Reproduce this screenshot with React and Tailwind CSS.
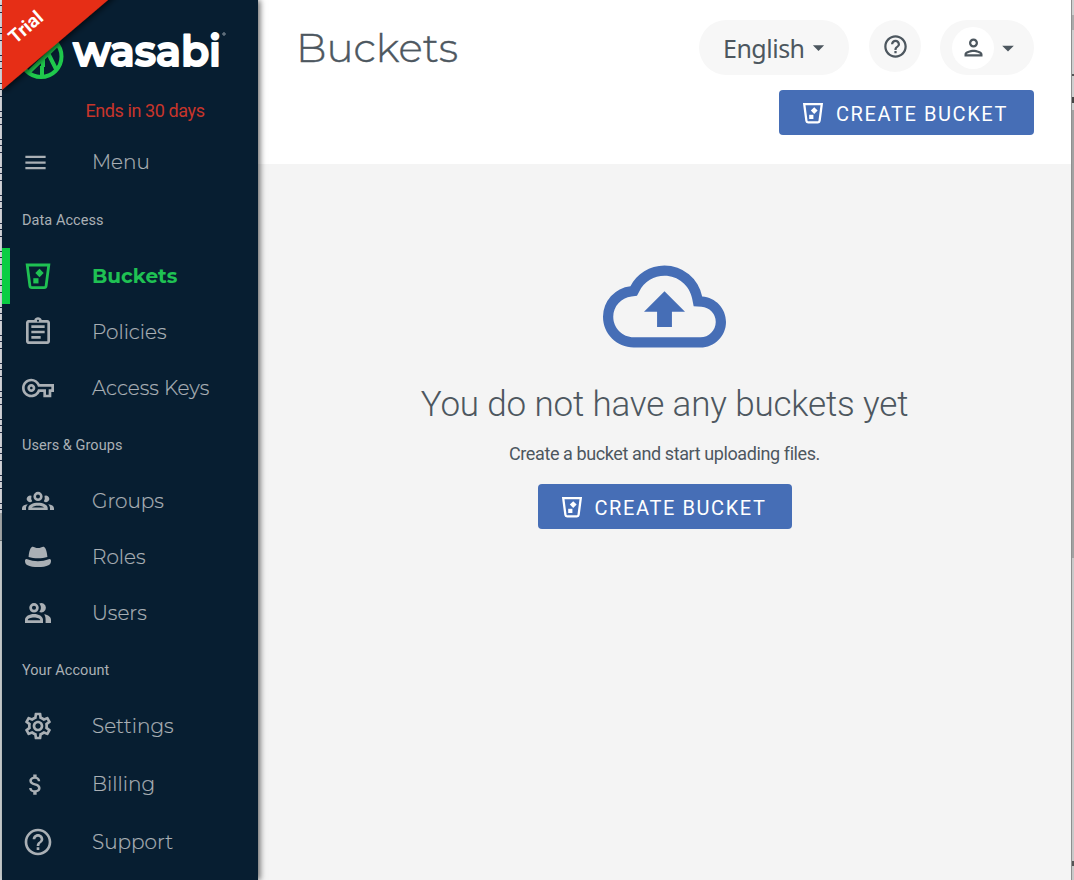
import {
    MdArrowDropDown,
    MdAttachMoney,
    MdHelpOutline,
    MdMenu,
    MdOutlineAssignment,
    MdOutlineBackup,
    MdOutlinePerson,
    MdOutlineSettings,
    MdOutlineVpnKey,
} from 'react-icons/md';

function BucketIcon({ size = 32 }) {
    return (
        <svg width={size} height={size} viewBox="0 0 32 32" fill="none">
            <path d="M5.200 5h21.600l-2.700 20.800a2 2 0 0 1-2 1.800H9.900a2 2 0 0 1-2-1.800L5.200 5Z" stroke="currentColor" strokeWidth="2.800" />
            <path d="M17.500 8.800l4.200 4.200-4.200 4.200-4.200-4.200z" fill="currentColor" />
            <path d="M11.300 18.200h5.200v5.200h-5.200z" fill="currentColor" />
        </svg>
    );
}

function HatIcon({ size = 32 }) {
    return (
        <svg width={size} height={size} viewBox="0 0 32 32" fill="currentColor">
            <path d="M6.600 16c.3-4.200 1.300-8.900 3.500-10.200 1.300-.7 3.500 1.200 5.900 1.200s4.600-1.900 5.900-1.200c2.200 1.300 3.200 6 3.500 10.200-5.500 1.700-13.300 1.700-18.800 0Z" />
            <path d="M5.300 18.200c6.500 2.600 14.900 2.600 21.400 0 1.500-.4 2.500.6 2.300 2.100-.2 1.600-.7 3-2 3.600-6.200 2.900-15.800 2.900-22 0-1.300-.6-1.800-2-2-3.600-.2-1.500.8-2.500 2.300-2.100Z" />
        </svg>
    );
}

function GroupsIcon({ size = 32 }) {
    return (
        <svg width={size} height={size} viewBox="0 0 32 32" fill="currentColor">
            <circle cx="16" cy="11.400" r="3.300" fill="none" stroke="currentColor" strokeWidth="2.600" />
            <path d="M10.200 16.300a3.300 3.300 0 1 1-.7-5.500 7 7 0 0 0 .7 5.500ZM21.800 16.300a3.300 3.300 0 1 0 .7-5.500 7 7 0 0 1-.7 5.500Z" />
            <path d="M16 17.800c-5 0-9.700 2-9.700 5.300V25h19.400v-1.900c0-3.300-4.700-5.300-9.700-5.300Zm-6 4.700c1.800-2.200 10.200-2.200 12 0Z" />
            <path d="M5.900 19.200C2.200 19.400 0 21 0 23.300V25h4v-2c0-1.600.8-2.700 1.900-3.800ZM26.100 19.200c3.700.2 5.900 1.800 5.900 4.100V25h-4v-2c0-1.600-.8-2.700-1.900-3.800Z" />
        </svg>
    );
}

function UsersIcon({ size = 32 }) {
    return (
        <svg width={size} height={size} viewBox="0 0 32 32" fill="currentColor">
            <circle cx="12" cy="10.800" r="3.400" fill="none" stroke="currentColor" strokeWidth="2.700" />
            <path d="M17.300 6.500a4.700 4.700 0 1 1 0 8.600 7.200 7.200 0 0 0 0-8.600Z" />
            <path d="M12 17c-4.800 0-9 2.300-9 5.800V26h18v-3.200C21 19.300 16.800 17 12 17Zm-6.200 6.300c0-3.600 12.400-3.600 12.400 0Z" />
            <path d="M22.200 17.300c4 .6 6.800 2.600 6.800 5.500V26h-5.400v-3.200c0-2.300-.4-4.100-1.400-5.500Z" />
        </svg>
    );
}

function Logo() {
    return (
        <svg width="256" height="94" viewBox="0 0 256 94" className="block">
            <defs>
                <filter id="ribbon" x="-10%" y="-10%" width="130%" height="130%">
                    <feDropShadow dx="1" dy="2" stdDeviation="3" floodColor="#000" floodOpacity="0.7" />
                </filter>
            </defs>
            <g fill="none" stroke="#1fc94c" strokeWidth="4">
                <circle cx="39" cy="56.500" r="20.500" />
                <path d="M56 44 26 73M46 53l9 18M41 58v9M40 76V66" />
            </g>
            <text
                x="71"
                y="66"
                textLength="148"
                lengthAdjust="spacingAndGlyphs"
                fill="#fff"
                stroke="#fff"
                strokeWidth="2"
                strokeLinejoin="round"
                className="font-['Montserrat'] text-[43px] font-semibold"
            >
                wasabi
            </text>
            <circle cx="222" cy="34" r="1.200" fill="none" stroke="#8c98a2" />
            <path d="M0-8H115L106 0 0 90Z" fill="#e62d14" filter="url(#ribbon)" />
            <text transform="translate(13.500 44.500) rotate(-41)" fill="#fff" className="font-['Roboto'] text-[19px] font-bold">
                Trial
            </text>
        </svg>
    );
}

function SectionLabel({ children }) {
    return <div className="flex h-[57px] items-center pt-0.5 pl-5 font-['Roboto'] text-[14.500px] tracking-[0.050px]">{children}</div>;
}

function NavItem({ icon: Icon, size = 32, label, active }) {
    return (
        <a
            href="#"
            className={
                active
                    ? 'flex h-14 items-center border-l-8 border-[#0bce43] pl-3 font-bold text-[#1fc153]'
                    : 'flex h-14 items-center pl-5 font-light [-webkit-text-stroke:0.200px]'
            }
        >
            <span className="flex w-[70px]">
                <Icon size={size} />
            </span>
            <span className="font-['Montserrat',sans-serif] text-[20px]">{label}</span>
        </a>
    );
}

function CreateButton({ className }) {
    return (
        <button
            className={`flex h-[45px] items-center rounded bg-[#466eb6] pl-[21px] font-['Roboto'] text-[20px] tracking-[1.600px] text-white ${className}`}
        >
            <BucketIcon size={26} />
            <span className="ml-2.5 pt-0.5">CREATE BUCKET</span>
        </button>
    );
}

function Sidebar() {
    return (
        <aside className="relative z-10 flex w-64 shrink-0 flex-col bg-[#071e31] text-[#aab0b5] shadow-[2px_0_6px_rgba(0,0,0,0.6)]">
            <Logo />
            <div className="flex h-[39px] justify-center pt-[3px] pl-[30px] font-['Roboto'] text-[18px] tracking-[-0.400px] text-[#c7352b]">
                Ends in 30 days
            </div>
            <div className="pt-px">
                <NavItem icon={MdMenu} size={27} label="Menu" />
            </div>
            <div className="pt-px">
                <SectionLabel>Data Access</SectionLabel>
            </div>
            <NavItem icon={BucketIcon} label="Buckets" active />
            <NavItem icon={MdOutlineAssignment} label="Policies" />
            <NavItem icon={MdOutlineVpnKey} label="Access Keys" />
            <SectionLabel>Users &amp; Groups</SectionLabel>
            <NavItem icon={GroupsIcon} label="Groups" />
            <NavItem icon={HatIcon} label="Roles" />
            <NavItem icon={UsersIcon} label="Users" />
            <SectionLabel>Your Account</SectionLabel>
            <div className="flex flex-col gap-0.5">
                <NavItem icon={MdOutlineSettings} label="Settings" />
                <NavItem icon={MdAttachMoney} size={27} label="Billing" />
                <NavItem icon={MdHelpOutline} label="Support" />
            </div>
        </aside>
    );
}

function Header() {
    return (
        <header className="flex h-[164px] justify-between bg-white pr-[37px] pl-[38px] text-[#4d575f]">
            <h1 className="pt-[19px] font-['Montserrat',sans-serif] text-[40.500px] leading-[58px] font-light [-webkit-text-stroke:0.400px]">Buckets</h1>
            <div className="flex flex-col items-end pt-5">
                <div className="flex">
                    <button className="flex h-[55px] w-[150px] items-center rounded-full bg-[#f7f7f7] pl-[24px] font-['Noto_Sans'] text-[25px] tracking-[-0.500px]">
                        <span className="pt-0.5">English</span>
                        <MdArrowDropDown size={27} />
                    </button>
                    <button className="ml-5 flex size-[52px] items-center justify-center rounded-full bg-[#f7f7f7]">
                        <MdHelpOutline size={27} />
                    </button>
                    <button className="ml-[19px] flex h-[55px] w-[94px] items-center rounded-full bg-[#f7f7f7] pl-3">
                        <span className="flex size-[42px] items-center justify-center rounded-full bg-white">
                            <MdOutlinePerson size={27} />
                        </span>
                        <MdArrowDropDown size={28} />
                    </button>
                </div>
                <CreateButton className="mt-[15px] w-[255px]" />
            </div>
        </header>
    );
}

function EmptyState() {
    return (
        <section className="flex flex-1 flex-col items-center bg-[#f4f4f4] pt-[81px] font-['Roboto'] text-[#4d575f]">
            <MdOutlineBackup size={123} className="text-[#466eb6]" />
            <h2 className="mt-[11px] text-[35px] leading-[52px] font-light tracking-[-0.160px] whitespace-nowrap">You do not have any buckets yet</h2>
            <p className="mt-[9px] text-[18px] leading-[28px] tracking-[-0.400px]">Create a bucket and start uploading files.</p>
            <CreateButton className="mt-[16px] w-[254px]" />
        </section>
    );
}

export default function App() {
    return (
        <div className="flex h-[880px] w-[1074px] overflow-hidden bg-white">
            {/* edges of the window behind */}
            <div className="flex w-0.5 shrink-0 flex-col bg-[#d3d8da]">
                <div className="h-[513px] bg-[repeating-linear-gradient(#e2e4ea_0_5px,#26304a_5px_6px,#e2e4ea_6px_12px,#26304a_12px_13px,#e2e4ea_13px_27px,#26304a_27px_28px)]" />
                <div className="h-7 border-b border-[#6f7678] bg-[#adb1b2]" />
            </div>
            <Sidebar />
            <main className="flex w-[813px] shrink-0 flex-col">
                <Header />
                <EmptyState />
            </main>
            <div className="flex w-[3px] shrink-0 flex-col border-l border-[#8f8f8f] bg-[#c9c9c9]">
                <div className="h-[15px] bg-[#d0d0d0]" />
                <div className="h-[15px] bg-[#ababab]" />
                <div className="h-[44px] bg-[#cfcfcf]" />
                <div className="h-0.5 bg-[#555]" />
                <div className="h-[21px] bg-[#cfcfcf]" />
                <div className="h-[6px] bg-[#444]" />
                <div className="h-[7px] bg-[#cfcfcf]" />
                <div className="h-[448px] bg-[#a2a2a2]" />
                <div className="h-[303px] bg-[#c9c9c9]" />
                <div className="h-[5px] bg-[#555]" />
            </div>
        </div>
    );
}
